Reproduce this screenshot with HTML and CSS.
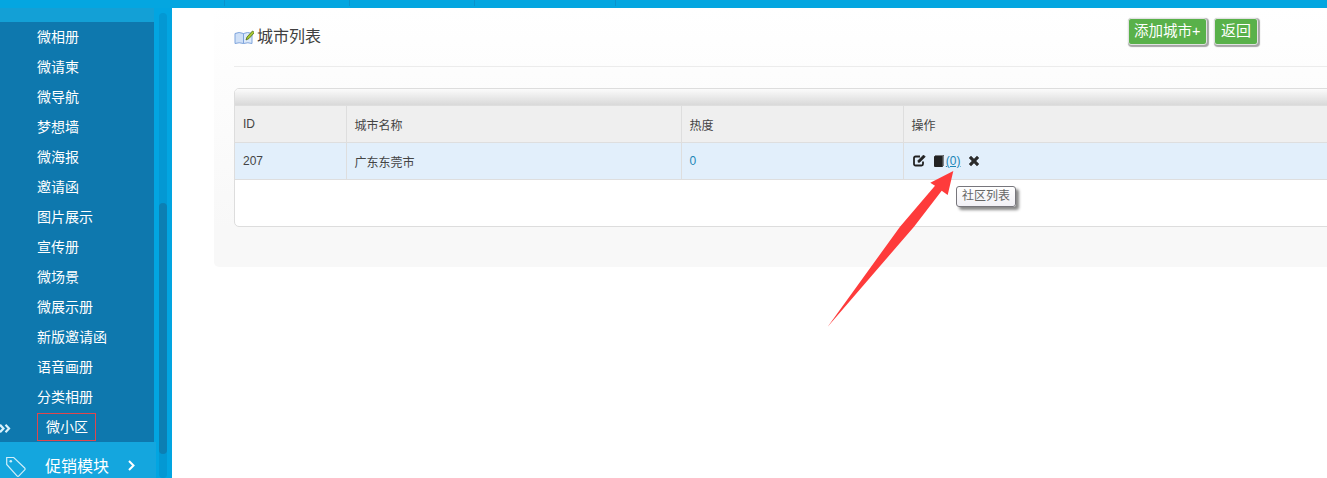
FILE: index.html
```html
<!DOCTYPE html>
<html lang="zh-CN">
<head>
<meta charset="utf-8">
<title>城市列表</title>
<link rel="stylesheet" href="styles.css">
</head>
<body>
<div class="topbar"><i class="t1"></i><i class="t2"></i><i class="t2"></i><i class="t3"></i></div>
<div class="shell">
  <aside class="sidebar">
    <div class="side-col">
      <div class="sub-head"></div>
      <ul class="submenu">
        <li>微相册</li>
        <li>微请柬</li>
        <li>微导航</li>
        <li>梦想墙</li>
        <li>微海报</li>
        <li>邀请函</li>
        <li>图片展示</li>
        <li>宣传册</li>
        <li>微场景</li>
        <li>微展示册</li>
        <li>新版邀请函</li>
        <li>语音画册</li>
        <li>分类相册</li>
        <li class="current">
          <svg class="chev" width="11" height="9" viewBox="0 0 11 9" fill="none" stroke="#d9f1fb" stroke-width="2.200"><path d="M0 .8l3.500 3.700L0 8.200M5.500 .8l3.500 3.700-3.500 3.700"/></svg>
          <span class="boxed">微小区</span>
        </li>
      </ul>
    </div>
    <div class="module">
      <svg class="tag" width="20" height="21" viewBox="0 0 20 21" fill="none" stroke="#cfeefa" stroke-width="1.200"><path d="M.7 1.500h7l11 10.500a1.300 1.300 0 0 1 0 1.900l-5.800 6a1.300 1.300 0 0 1-1.900 0L.7 8.500z"/><circle cx="4.800" cy="5.300" r="1.300" fill="#cfeefa" stroke="none"/></svg>
      <span class="module-name">促销模块</span>
      <svg class="arrow-r" width="7" height="11" viewBox="0 0 7 11" fill="none" stroke="#fff" stroke-width="2"><path d="M1 1l4.500 4.500L1 10"/></svg>
    </div>
    <div class="scroll"><div class="thumb"></div></div>
  </aside>
  <main class="main">
    <section class="panel">
      <header class="panel-head">
        <h1 class="title">
          <svg width="20" height="16" viewBox="0 0 20 16"><path d="M1 4.500q4-2 8.500 0v10q-4.500-1.500-8.500 0z" fill="#cfe0f7" stroke="#7fa4dc"/><path d="M9.500 4.500q4-2 8.500 0v10q-4-1.500-8.500 0z" fill="#dce9fa" stroke="#7fa4dc"/><path d="M12 11l1-3 5.500-6 2 1.500-5.500 6z" fill="#a8c832" stroke="#4d6b10" stroke-width=".8"/></svg>
          <span>城市列表</span>
        </h1>
        <div class="actions">
          <a class="btn btn-add">添加城市+</a>
          <a class="btn">返回</a>
        </div>
      </header>
      <div class="table-box">
        <div class="table-cap"></div>
        <table class="grid">
          <colgroup><col class="c1"><col class="c2"><col class="c3"><col class="c4"></colgroup>
          <thead><tr><th>ID</th><th>城市名称</th><th>热度</th><th>操作</th></tr></thead>
          <tbody><tr>
            <td>207</td><td>广东东莞市</td><td class="num">0</td>
            <td class="ops">
              <svg width="13" height="13" viewBox="0 0 13 13" fill="none" stroke="#222"><path d="M10 7.500v2.500a1.500 1.500 0 0 1-1.500 1.500h-6A1.500 1.500 0 0 1 1 10V4a1.500 1.500 0 0 1 1.500-1.500H7" stroke-width="1.800"/><path d="M5 8.300V6.500L10.500 1 12.300 2.800 6.800 8.300z" fill="#222" stroke-width=".6"/></svg>
              <svg class="book" width="10" height="12" viewBox="0 0 10 12"><path d="M1 0h9v11h-.7V.7H1z" fill="#555"/><path d="M0 1.500A1 1 0 0 1 1 1h7.800v11H1a1 1 0 0 1-1-1z" fill="#222"/></svg><a class="count">(0)</a>
              <svg class="del" width="12" height="12" viewBox="0 0 12 12"><path d="M3 .8L6 3.800 9 .8 11.200 3 8.200 6l3 3L9 11.200l-3-3-3 3L.8 9l3-3-3-3z" fill="#2b2b2b"/></svg>
            </td>
          </tr></tbody>
        </table>
      </div>
    </section>
    <div class="tooltip">社区列表</div>
    <svg class="callout" width="140" height="170" viewBox="0 0 140 170"><path d="M129.300 7 L106.300 18.700 L111 21.700 L76 62.700 L3.500 163 L90 62.700 L117.700 26.700 L123.700 31 Z" fill="#fe3b3b"/></svg>
  </main>
</div>
</body>
</html>
```
FILE: styles.css
```css
* { box-sizing: border-box; }
html, body { margin: 0; height: 478px; overflow: hidden; background: #fff; }
body { font-family: "Liberation Sans", "Noto Sans CJK SC", sans-serif; font-size: 12px; color: #333; }

.topbar { height: 8px; background: #04a6e0; display: flex; }
.topbar i { height: 6px; border-right: 1px solid #0a93cd; }
.topbar .t1 { width: 225px; }
.topbar .t2 { width: 125px; }
.topbar .t3 { width: 141px; }
.shell { display: flex; height: 470px; }

.sidebar { width: 172px; flex: none; background: #02a5e1; position: relative; display: flex; flex-direction: column; overflow: hidden; }
.side-col { width: 154px; flex: none; }
.sub-head { height: 14px; background: #13a0d6; }
.submenu { list-style: none; margin: 0; padding: 0; background: #0e78ae; height: 420px; color: #fff; font-size: 14px; }
.submenu li { height: 30px; line-height: 30px; padding-left: 37px; position: relative; white-space: nowrap; }
.submenu .chev { position: absolute; left: 0; top: 11px; }
.boxed { display: block; width: 59px; height: 28px; margin-top: 1px; line-height: 27px; padding-left: 8px; border: 1px solid #e0474c; }
.module { height: 46px; flex: none; background: #14a6de; color: #fff; display: flex; align-items: center; font-size: 16px; width: 156px; }
.tag { margin-left: 6px; margin-top: 3px; }
.module-name { margin-left: 19px; }
.arrow-r { margin-left: 19px; }

.scroll { position: absolute; left: 159px; top: 5px; bottom: 0; width: 8px; border-radius: 4px; background: #0398d3; }
.thumb { position: absolute; left: 0; top: 190px; height: 251px; width: 8px; border-radius: 4px; background: #0c7fb3; }

.main { flex: 1; min-width: 0; position: relative; padding-left: 42px; overflow: hidden; }
.panel { margin-right: -20px; height: 259px; background: linear-gradient(#fff 0, #f8f8f8 85%); border-radius: 0 0 0 5px; padding: 0 0 0 20px; }
.panel-head { height: 59px; border-bottom: 1px solid #ececec; display: flex; justify-content: space-between; align-items: flex-start; padding-right: 89px; }
.title { margin: 20px 0 0; display: flex; align-items: center; gap: 3px; font-size: 16px; font-weight: 400; color: #404040; line-height: 18px; }
.actions { display: flex; gap: 7px; margin-top: 10px; }
.btn { display: block; height: 27px; line-height: 24px; padding: 0 6px; background: #59b14a; color: #fff; font-size: 15px; border: 1px solid #e2e2e2; border-radius: 3px; box-shadow: 1px 1px 1px 1px #a5a5a5; }
.btn-add { font-size: 14.5px; padding: 0 5.5px; }

.table-box { margin-top: 21px; height: 139px; background: #fff; border: 1px solid #ddd; border-radius: 5px 0 0 5px; overflow: hidden; }
.table-cap { height: 16px; background: linear-gradient(#fbfbfb, #d9d9d9); }
.grid { border-collapse: collapse; table-layout: fixed; width: 1120px; font-size: 12px; }
.c1 { width: 111px; } .c2 { width: 335px; } .c3 { width: 222px; }
.grid th, .grid td { border: 1px solid #dedede; border-left: 0; text-align: left; font-weight: 400; padding: 0 8px; color: #444; }
.grid th { height: 37px; background: #efefef; }
.grid td { height: 37px; background: #e2effb; }
.grid .num { color: #1a86b8; }
.grid .ops { white-space: nowrap; padding-left: 9px; }
.ops svg { vertical-align: -2px; }
.book { margin-left: 5px; margin-right: 2px; }
.count { color: #1a86b8; text-decoration: underline; }
.del { margin-left: 4px; }

.tooltip { position: absolute; left: 784px; top: 178px; height: 21px; line-height: 19px; padding: 0 5px; background: linear-gradient(#fff, #f1f0f5); border: 1px solid #77767c; border-radius: 3px; color: #666; font-size: 12px; box-shadow: 3px 3px 3px #888; }
.callout { position: absolute; left: 652px; top: 156px; }
```
